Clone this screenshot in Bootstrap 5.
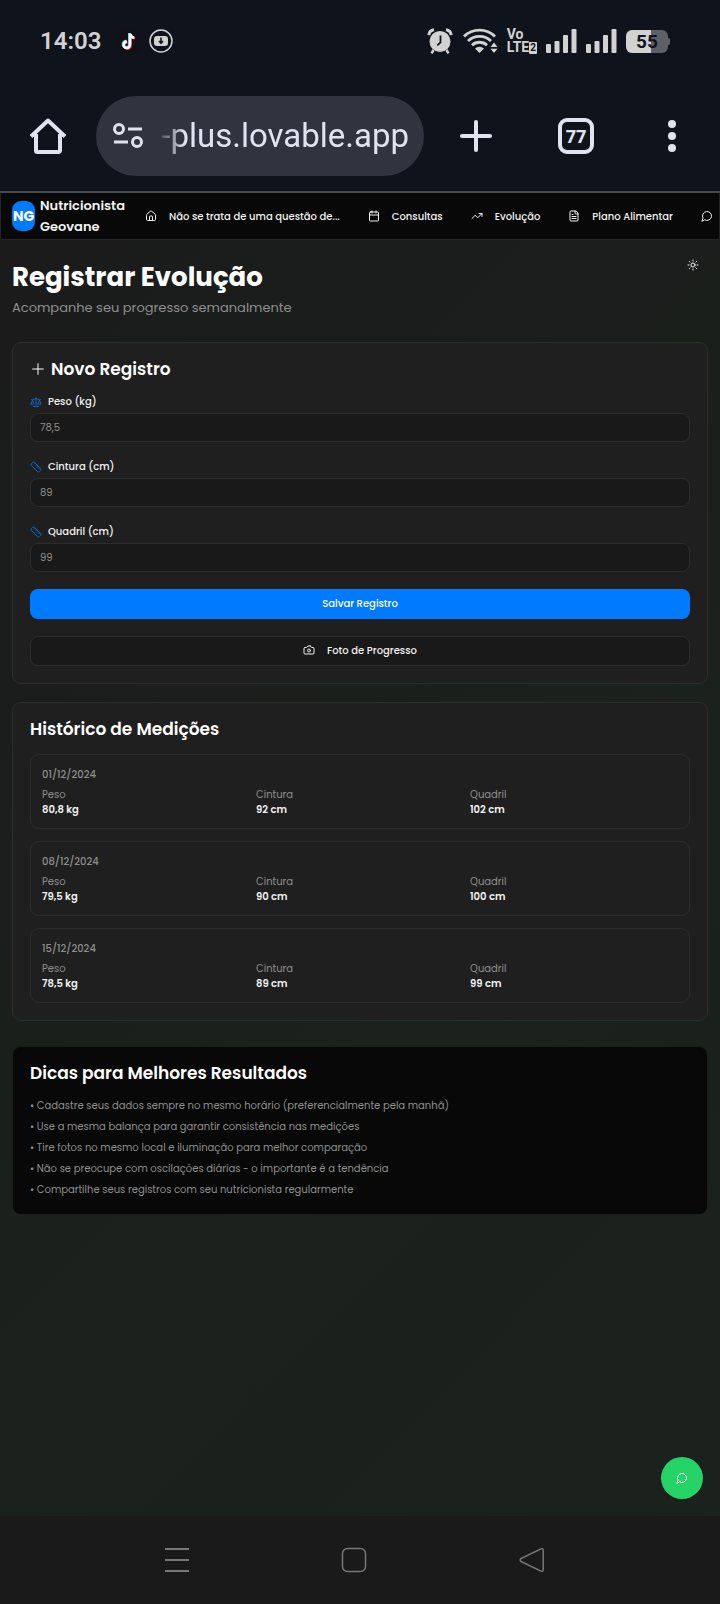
<!DOCTYPE html>
<html lang="pt-BR" data-bs-theme="dark">
<head>
<meta charset="utf-8">
<meta name="viewport" content="width=device-width, initial-scale=1">
<title>Nutricionista Geovane - Registrar Evolução</title>
<link rel="stylesheet" href="https://cdn.jsdelivr.net/npm/bootstrap@5.3.0/dist/css/bootstrap.min.css">
<style>
  :root { --ink: #f2f2f2; --muted: #8f8f8f; --line: #2c2c2c; --panel: #1f1f1f; --brand: #007bff; --chrome: #0f131c; --chrome-ink: #e0e3f0; }
  body { font-family: Poppins, Inter, sans-serif; font-size: 10px; line-height: 15px; color: var(--ink); background: #1b1b1b; }
  button { color: inherit; }
  .lucide { width: 12px; height: 12px; fill: none; stroke: currentColor; stroke-width: 2; stroke-linecap: round; stroke-linejoin: round; flex: none; }

  /* phone status bar */
  .status-bar { background: var(--chrome); color: #d2d2d2; height: 82px; padding: 0 49px 0 40px; font-family: Roboto, sans-serif; }
  .clock { font-size: 24px; line-height: 28px; font-weight: 600; }
  .status-icons { gap: 9px; }
  .volte { font-size: 14px; line-height: 13px; font-weight: 700; }
  .volte-num { background: #d2d2d2; color: var(--chrome); font-size: 10px; line-height: 12px; border-radius: 1px; padding: 0 1px; }

  /* browser toolbar */
  .browser-bar { background: var(--chrome); color: var(--chrome-ink); padding: 14px 24px 15px; border-bottom: 2px solid #45484f; }
  .icon-btn { background: none; border: 0; padding: 0; display: flex; align-items: center; justify-content: center; width: 48px; height: 48px; flex: none; }
  .browser-bar .new-tab { margin-right: 52px; }
  .browser-bar .tabs-btn { margin-right: 48px; }
  .address { background: #30343f; height: 80px; border-radius: 40px; padding: 0 15px 0 16px; margin: 0 28px 0 24px; min-width: 0; }
  .address input { background: none; border: 0; outline: 0; color: var(--chrome-ink); font: 33px/40px Roboto, sans-serif; text-align: right; width: 0; min-width: 0; padding: 0; -webkit-mask-image: linear-gradient(90deg, transparent 12px, #000 40px); mask-image: linear-gradient(90deg, transparent 12px, #000 40px); }
  .tab-count { border: 4px solid var(--chrome-ink); border-radius: 9px; width: 36px; height: 36px; font: 700 18px/28px "Open Sans", sans-serif; }

  /* site navigation */
  .site-nav { background: #080808; border: 1px solid #242424; border-top: 0; height: 47px; padding: 0 0 0 11px; overflow: hidden; font-weight: 500; }
  .site-nav a { color: var(--ink); text-decoration: none; white-space: nowrap; display: flex; align-items: center; flex: none; }
  .site-brand { gap: 5px; margin-right: 20px; }
  .logo-box { width: 23px; height: 30px; border-radius: 9px; background: var(--brand); color: #fff; font-size: 14px; font-weight: 700; flex: none; }
  .brand-name { font-size: 13px; line-height: 21px; font-weight: 600; }
  .menu-list { gap: 28px; }
  .menu-item { gap: 12px; }

  /* page */
  .page { background: linear-gradient(135deg, #1b1b1b 0%, #1b1c1c 15%, #1b201c 50%, #1a211c 75%, #1b211d 100%); padding: 10px 12px 24px; }
  h1 { font-size: 26px; line-height: 36px; font-weight: 700; margin: 9px 0 4px; }
  .subtitle { font-size: 13px; line-height: 18px; color: var(--muted); margin-bottom: 25px; }
  .theme-btn { width: 30px; height: 30px; }
  .panel { background: var(--panel); border: 1px solid var(--line); border-radius: 9px; padding: 16px 17px 17px; }
  .panel + .panel { margin-top: 18px; }
  .panel h2 { font-size: 17px; line-height: 20px; font-weight: 600; margin: 0 0 15px; gap: 5px; }
  .panel h2 .lucide { width: 16px; height: 16px; stroke-width: 1.5; }
  .form-stack { gap: 17px; }
  .field label { font-weight: 500; gap: 6px; margin-bottom: 4px; }
  .field .lucide { color: #0f68cc; }
  .field .form-control { background: #191919; border: 1px solid var(--line); border-radius: 8px; height: 29px; padding: 0 9px; font-size: 10px; color: var(--ink); }
  .form-control::placeholder { color: var(--muted); }
  .action { height: 30px; border-radius: 8px; font-size: 10px; line-height: 15px; font-weight: 500; padding: 0 0 2px; gap: 12px; }
  .action-main { background: var(--brand); color: #fff; }
  .action-alt { background: #191919; border: 1px solid var(--line); color: var(--ink); }
  .entries { gap: 12px; }
  .entry { border: 1px solid var(--line); border-radius: 9px; padding: 12px 11px 11px; }
  .entry .row { --bs-gutter-x: 6px; }
  .entry-date { font-weight: 500; margin-bottom: 5px; }
  .dim { color: var(--muted); }
  .panel.tips { background: #080808; border-color: #1b1d1b; margin-top: 25px; }
  .tip-list { gap: 6px; }
  .fab { position: fixed; right: 17px; bottom: 105px; width: 42px; height: 42px; border: 0; border-radius: 50%; background: #25d366; color: #fff; }

  /* phone navigation */
  .system-nav { background: #1a1a1a; color: #777; height: 88px; padding: 0 175px 0 165px; }
</style>
</head>
<body class="d-flex flex-column min-vh-100">

<div class="status-bar d-flex align-items-center justify-content-between">
  <div class="d-flex align-items-center">
    <span class="clock">14:03</span>
    <svg class="ms-3" width="24" height="24" viewBox="0 0 24 24" aria-hidden="true">
      <rect width="24" height="24" rx="6" fill="#12111a"/>
      <g fill="none" stroke-width="2.6"><path stroke="#25d8dc" d="M12.3 4v11.2a3.2 3.2 0 1 1-3.2-3.2M12.3 4.5c.3 2.2 2 3.7 4.3 3.9"/><path stroke="#ef2f50" d="M13.7 5v11.4a3.2 3.2 0 1 1-3.2-3.2M13.7 5.4c.3 2.2 2 3.7 4.3 3.9"/><path stroke="#fff" d="M13 4.5v11.3a3.2 3.2 0 1 1-3.2-3.2M13 4.8c.3 2.2 2 3.7 4.3 3.9"/></g>
    </svg>
    <svg class="ms-2" width="24" height="24" viewBox="0 0 24 24" aria-hidden="true">
      <circle cx="12" cy="12" r="11" fill="none" stroke="#d2d2d2" stroke-width="1.5"/>
      <rect x="5" y="7" width="14" height="10" rx="3" fill="#d2d2d2"/>
      <path d="M12 8.500v5M10 12l2 2.200 2-2.200" stroke="#12151d" stroke-width="1.6" fill="none"/>
    </svg>
  </div>
  <div class="d-flex align-items-center status-icons">
    <svg width="26" height="26" viewBox="0 0 26 26" aria-hidden="true">
      <circle cx="13" cy="13.5" r="10.5" fill="#d2d2d2"/><path d="M1.800 7.200A6 6 0 0 1 7 1.800M24.200 7.200A6 6 0 0 0 19 1.800" stroke="#d2d2d2" stroke-width="3" fill="none"/>
      <path d="M6.500 22l-2 3.300M19.500 22l2 3.300" stroke="#d2d2d2" stroke-width="2.5"/><path d="M13.500 7.500v6.800l-3.200 3" stroke="#0f131c" stroke-width="1.8" fill="none"/>
    </svg>
    <svg width="36" height="26" viewBox="0 0 36 26" aria-hidden="true">
      <g fill="none" stroke="#d2d2d2" stroke-width="2.8"><path d="M2 8.500a22 22 0 0 1 31 0M6 13a16.500 16.500 0 0 1 23 0M10 17.200a11 11 0 0 1 15 0"/></g>
      <path d="M17.500 25l-4.500-4.500a6.500 6.500 0 0 1 9 0zM28.500 19l3.500-4.500 3.500 4.500zM28.500 20.800h7L32 25z" fill="#d2d2d2"/>
    </svg>
    <div class="volte"><div>Vo</div><div class="d-flex align-items-center">LTE<span class="volte-num">2</span></div></div>
    <svg width="31" height="26" viewBox="0 0 31 26" fill="#d2d2d2" aria-hidden="true"><rect x="0" y="16" width="5" height="9" rx="1"/><rect x="8.5" y="13" width="5" height="12" rx="1"/><rect x="17" y="7" width="5" height="18" rx="1"/><rect x="25.5" y="1" width="5" height="24" rx="1"/></svg>
    <svg width="31" height="26" viewBox="0 0 31 26" fill="#d2d2d2" aria-hidden="true"><rect x="0" y="16" width="5" height="9" rx="1"/><rect x="8.5" y="13" width="5" height="12" rx="1"/><rect x="17" y="7" width="5" height="18" rx="1"/><rect x="25.5" y="1" width="5" height="24" rx="1"/></svg>
    <svg width="45" height="25" viewBox="0 0 45 25" role="img" aria-label="Bateria 55">
      <path d="M6 1h19v23H6a6 6 0 0 1-6-6V7a6 6 0 0 1 6-6z" fill="#d2d2d2"/><path d="M25 1h11a6 6 0 0 1 6 6v2h.5a1.500 1.500 0 0 1 1.500 1.500v4a1.500 1.500 0 0 1-1.500 1.500H42v2a6 6 0 0 1-6 6H25z" fill="#5d6068"/>
      <text x="21" y="19" text-anchor="middle" font-family="Roboto, sans-serif" font-size="19" font-weight="700" fill="#0f131c">55</text>
    </svg>
  </div>
</div>

<div class="browser-bar d-flex align-items-center">
  <button class="icon-btn" aria-label="Início">
    <svg width="38" height="38" viewBox="0 0 38 38" fill="none" stroke="currentColor" stroke-width="4" stroke-linejoin="round" aria-hidden="true"><path d="M2 19.500 19 3.500l17 16M7 17v16.500a1.500 1.500 0 0 0 1.500 1.500h21a1.500 1.500 0 0 0 1.500-1.500V17"/></svg>
  </button>
  <div class="address d-flex align-items-center flex-grow-1">
    <svg class="flex-shrink-0" width="32" height="28" viewBox="0 0 32 28" fill="none" stroke="currentColor" stroke-width="3" aria-hidden="true"><circle cx="7" cy="7" r="4.5"/><path d="M16 7h14M2 20h14"/><circle cx="25" cy="20" r="4.5"/></svg>
    <input class="flex-grow-1" type="text" value="-plus.lovable.app" aria-label="Endereço">
  </div>
  <button class="icon-btn new-tab" aria-label="Nova guia">
    <svg width="32" height="32" viewBox="0 0 32 32" stroke="currentColor" stroke-width="4" stroke-linecap="round" aria-hidden="true"><path d="M2 16h28M16 2v28"/></svg>
  </button>
  <button class="icon-btn tabs-btn" aria-label="Guias abertas"><span class="tab-count">77</span></button>
  <button class="icon-btn" aria-label="Mais opções">
    <svg width="8" height="32" viewBox="0 0 8 32" fill="currentColor" aria-hidden="true"><circle cx="4" cy="4" r="4"/><circle cx="4" cy="16" r="4"/><circle cx="4" cy="28" r="4"/></svg>
  </button>
</div>

<nav class="site-nav d-flex align-items-center">
  <a href="#" class="site-brand">
    <span class="logo-box d-flex align-items-center justify-content-center">NG</span>
    <span class="brand-name">Nutricionista<br>Geovane</span>
  </a>
  <div class="d-flex align-items-center menu-list">
    <a href="#" class="menu-item"><svg class="lucide" viewBox="0 0 24 24"><path d="M15 21v-8a1 1 0 0 0-1-1h-4a1 1 0 0 0-1 1v8"/><path d="M3 10a2 2 0 0 1 .709-1.528l7-5.999a2 2 0 0 1 2.582 0l7 5.999A2 2 0 0 1 21 10v9a2 2 0 0 1-2 2H5a2 2 0 0 1-2-2z"/></svg>Não se trata de uma questão de...</a>
    <a href="#" class="menu-item"><svg class="lucide" viewBox="0 0 24 24"><path d="M8 2v4M16 2v4M3 10h18"/><rect width="18" height="18" x="3" y="4" rx="2"/></svg>Consultas</a>
    <a href="#" class="menu-item"><svg class="lucide" viewBox="0 0 24 24"><path d="M22 7l-8.500 8.500-5-5L2 17M16 7h6v6"/></svg>Evolução</a>
    <a href="#" class="menu-item"><svg class="lucide" viewBox="0 0 24 24"><path d="M15 2H6a2 2 0 0 0-2 2v16a2 2 0 0 0 2 2h12a2 2 0 0 0 2-2V7Z"/><path d="M14 2v4a2 2 0 0 0 2 2h4M10 9H8M16 13H8M16 17H8"/></svg>Plano Alimentar</a>
    <a href="#" class="menu-item" aria-label="Mensagens"><svg class="lucide" viewBox="0 0 24 24"><path d="M7.900 20A9 9 0 1 0 4 16.100L2 22Z"/></svg></a>
  </div>
</nav>

<main class="page flex-grow-1">
  <div class="d-flex align-items-start justify-content-between">
    <div>
      <h1>Registrar Evolução</h1>
      <p class="subtitle">Acompanhe seu progresso semanalmente</p>
    </div>
    <button class="icon-btn theme-btn" aria-label="Alternar tema"><svg class="lucide" viewBox="0 0 24 24"><circle cx="12" cy="12" r="4"/><path d="M12 2v2M12 20v2M4.930 4.930l1.410 1.410M17.660 17.660l1.410 1.410M2 12h2M20 12h2M6.340 17.660l-1.410 1.410M19.070 4.930l-1.410 1.410"/></svg></button>
  </div>

  <section class="panel">
    <h2 class="d-flex align-items-center"><svg class="lucide" viewBox="0 0 24 24"><path d="M4 12h16M12 4v16"/></svg>Novo Registro</h2>
    <form onsubmit="return false" class="d-flex flex-column form-stack">
      <div class="field"><label for="peso" class="d-flex align-items-center"><svg class="lucide" viewBox="0 0 24 24"><path d="m16 16 3-8 3 8c-.87.65-1.920 1-3 1s-2.130-.35-3-1ZM2 16l3-8 3 8c-.87.65-1.920 1-3 1s-2.130-.35-3-1ZM7 21h10M12 3v18M3 7h2c2 0 5-1 7-2 2 1 5 2 7 2h2"/></svg>Peso (kg)</label><input id="peso" class="form-control" type="text" inputmode="decimal" placeholder="78,5"></div>
      <div class="field"><label for="cintura" class="d-flex align-items-center"><svg class="lucide" viewBox="0 0 24 24"><path d="M21.300 15.300a2.400 2.400 0 0 1 0 3.400l-2.600 2.600a2.400 2.400 0 0 1-3.400 0L2.700 8.700a2.410 2.410 0 0 1 0-3.400l2.600-2.600a2.410 2.410 0 0 1 3.400 0ZM14.500 12.500l2-2M11.500 9.500l2-2M8.500 6.500l2-2M17.500 15.500l2-2"/></svg>Cintura (cm)</label><input id="cintura" class="form-control" type="text" inputmode="decimal" placeholder="89"></div>
      <div class="field"><label for="quadril" class="d-flex align-items-center"><svg class="lucide" viewBox="0 0 24 24"><path d="M21.300 15.300a2.400 2.400 0 0 1 0 3.400l-2.600 2.600a2.400 2.400 0 0 1-3.400 0L2.700 8.700a2.410 2.410 0 0 1 0-3.400l2.600-2.600a2.410 2.410 0 0 1 3.400 0ZM14.500 12.500l2-2M11.500 9.500l2-2M8.500 6.500l2-2M17.500 15.500l2-2"/></svg>Quadril (cm)</label><input id="quadril" class="form-control" type="text" inputmode="decimal" placeholder="99"></div>
      <button type="submit" class="btn action action-main w-100">Salvar Registro</button>
      <button type="button" class="btn action action-alt w-100 d-flex align-items-center justify-content-center"><svg class="lucide" viewBox="0 0 24 24"><path d="M14.500 4h-5L7 7H4a2 2 0 0 0-2 2v9a2 2 0 0 0 2 2h16a2 2 0 0 0 2-2V9a2 2 0 0 0-2-2h-3l-2.500-3z"/><circle cx="12" cy="13" r="3"/></svg>Foto de Progresso</button>
    </form>
  </section>

  <section class="panel">
    <h2>Histórico de Medições</h2>
    <div class="d-flex flex-column entries">
      <article class="entry"><div class="dim entry-date">01/12/2024</div><div class="row"><div class="col-4"><div class="dim">Peso</div><div class="fw-semibold">80,8 kg</div></div><div class="col-4"><div class="dim">Cintura</div><div class="fw-semibold">92 cm</div></div><div class="col-4"><div class="dim">Quadril</div><div class="fw-semibold">102 cm</div></div></div></article>
      <article class="entry"><div class="dim entry-date">08/12/2024</div><div class="row"><div class="col-4"><div class="dim">Peso</div><div class="fw-semibold">79,5 kg</div></div><div class="col-4"><div class="dim">Cintura</div><div class="fw-semibold">90 cm</div></div><div class="col-4"><div class="dim">Quadril</div><div class="fw-semibold">100 cm</div></div></div></article>
      <article class="entry"><div class="dim entry-date">15/12/2024</div><div class="row"><div class="col-4"><div class="dim">Peso</div><div class="fw-semibold">78,5 kg</div></div><div class="col-4"><div class="dim">Cintura</div><div class="fw-semibold">89 cm</div></div><div class="col-4"><div class="dim">Quadril</div><div class="fw-semibold">99 cm</div></div></div></article>
    </div>
  </section>

  <section class="panel tips">
    <h2>Dicas para Melhores Resultados</h2>
    <ul class="list-unstyled dim mb-0 d-flex flex-column tip-list">
      <li>• Cadastre seus dados sempre no mesmo horário (preferencialmente pela manhã)</li>
      <li>• Use a mesma balança para garantir consistência nas medições</li>
      <li>• Tire fotos no mesmo local e iluminação para melhor comparação</li>
      <li>• Não se preocupe com oscilações diárias - o importante é a tendência</li>
      <li>• Compartilhe seus registros com seu nutricionista regularmente</li>
    </ul>
  </section>
</main>

<button class="fab d-flex align-items-center justify-content-center" aria-label="Conversar"><svg class="lucide" viewBox="0 0 24 24"><path d="M7.900 20A9 9 0 1 0 4 16.100L2 22Z"/></svg></button>

<div class="system-nav d-flex align-items-center justify-content-between">
  <button class="icon-btn w-auto" aria-label="Recentes"><svg width="24" height="26" viewBox="0 0 24 26" stroke="currentColor" stroke-width="2"><path d="M0 2h24M0 13h24M0 24h24"/></svg></button>
  <button class="icon-btn w-auto" aria-label="Tela inicial"><svg width="26" height="26" viewBox="0 0 26 26" fill="none" stroke="currentColor" stroke-width="1.5"><rect x="1.5" y="1.5" width="23" height="23" rx="5"/></svg></button>
  <button class="icon-btn w-auto" aria-label="Voltar"><svg width="26" height="26" viewBox="0 0 26 26" fill="none" stroke="currentColor" stroke-width="1.5" stroke-linejoin="round"><path d="M2 11.500 22 1.800a1.500 1.500 0 0 1 2.200 1.300v19.800a1.500 1.500 0 0 1-2.200 1.300L2 14.500a1.700 1.700 0 0 1 0-3z"/></svg></button>
</div>

<script src="https://cdn.jsdelivr.net/npm/bootstrap@5.3.0/dist/js/bootstrap.bundle.min.js"></script>
</body>
</html>
